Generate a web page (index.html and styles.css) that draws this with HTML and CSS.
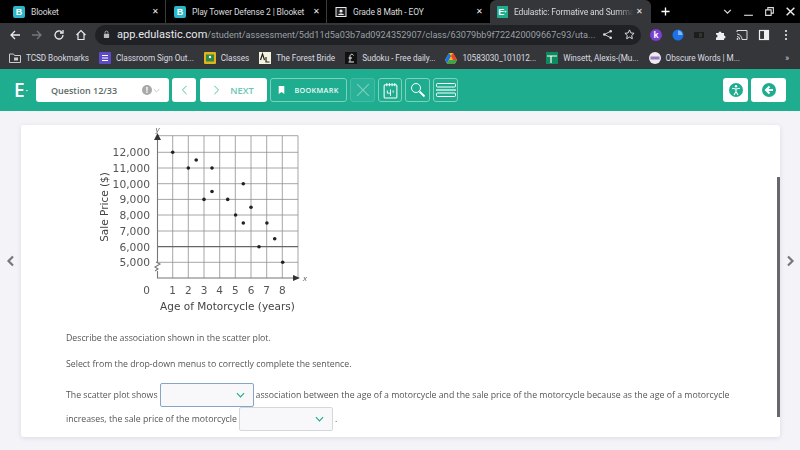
FILE: index.html
```html
<!DOCTYPE html>
<html lang="en">
<head>
<meta charset="utf-8">
<title>Edulastic</title>
<link rel="stylesheet" href="styles.css">
</head>
<body>
<div class="tabs">
  <div class="tab tab-a"><span class="fav fav-b">B</span><span class="tab-t">Blooket</span><span class="tab-x">✕</span></div>
  <div class="tab tab-b"><span class="fav fav-b">B</span><span class="tab-t">Play Tower Defense 2 | Blooket</span><span class="tab-x">✕</span></div>
  <div class="tab tab-c"><svg class="fav" viewBox="0 0 12 12"><rect x=".5" y="1" width="11" height="10" fill="#e8eaed"/><rect x="1.500" y="2" width="9" height="8" fill="#222"/><circle cx="6" cy="5" r="1.600" fill="#e8eaed"/><path d="M3 9c.5-2 5.500-2 6 0z" fill="#e8eaed"/></svg><span class="tab-t">Grade 8 Math - EOY</span><span class="tab-x">✕</span></div>
  <div class="tab tab-act"><span class="fav fav-e">E·</span><span class="tab-t tab-fade">Edulastic: Formative and Summa</span><span class="tab-x">✕</span></div>
  <svg class="plus" viewBox="0 0 10 10"><path d="M5 .5v9M.5 5h9" stroke="#fff" stroke-width="1.500"/></svg>
  <div class="win">
    <svg viewBox="0 0 10 10"><path d="M2 3.500l3 3 3-3" fill="none" stroke="#dadce0" stroke-width="1.100"/></svg>
    <svg viewBox="0 0 10 10"><path d="M1 8.500h8" stroke="#bbb" stroke-width="1.200"/></svg>
    <svg viewBox="0 0 10 10"><path d="M1.500 3.500h5v5h-5zM3.500 3.500v-2h5v5h-2" fill="none" stroke="#ddd"/></svg>
    <svg viewBox="0 0 10 10"><path d="M1.500 1.500l7 7M8.500 1.500l-7 7" stroke="#eee" stroke-width="1.300"/></svg>
  </div>
</div>
<div class="toolbar">
  <div class="nav">
    <svg viewBox="0 0 12 12"><path d="M11 6H2M6 2L2 6l4 4" fill="none" stroke="#e8eaed" stroke-width="1.300"/></svg>
    <svg viewBox="0 0 12 12"><path d="M1 6h9M6 2l4 4-4 4" fill="none" stroke="#777" stroke-width="1.300"/></svg>
    <svg viewBox="0 0 12 12"><path d="M10 6a4 4 0 1 1-1.200-2.900M10 1v3H7" fill="none" stroke="#e8eaed" stroke-width="1.300"/></svg>
    <svg viewBox="0 0 12 12"><path d="M1.500 6L6 1.500 10.500 6M3 5v5.500h6V5" fill="none" stroke="#e8eaed" stroke-width="1.200"/></svg>
  </div>
  <div class="omni">
    <svg class="lock" viewBox="0 0 8 10"><rect x="1" y="4" width="6" height="5" rx="1" fill="#b8babd"/><path d="M2.300 4V2.800a1.700 1.700 0 0 1 3.400 0V4" fill="none" stroke="#b8babd"/></svg>
    <span class="url"><b>app.edulastic.com</b>/student/assessment/5dd11d5a03b7ad0924352907/class/63079bb9f722420009667c93/uta...</span>
    <svg class="om-i" viewBox="0 0 12 12"><circle cx="9.500" cy="2.500" r="1.400" fill="#dadce0"/><circle cx="2.500" cy="6" r="1.400" fill="#dadce0"/><circle cx="9.500" cy="9.500" r="1.400" fill="#dadce0"/><path d="M9.500 2.500L2.500 6l7 3.500" fill="none" stroke="#dadce0"/></svg>
    <svg class="om-i" viewBox="0 0 12 12"><path d="M6 1l1.500 3.300 3.500.4-2.600 2.400.7 3.500L6 8.800l-3.100 1.800.7-3.500L1 4.700l3.500-.4z" fill="none" stroke="#e8eaed"/></svg>
  </div>
  <div class="exts">
    <span class="ext-k">k</span>
    <svg viewBox="0 0 12 12"><circle cx="6" cy="6" r="5.500" fill="#1a73e8"/><path d="M6 6V1.500A4.500 4.500 0 0 1 10.500 6z" fill="#8ab4f8"/></svg>
    <svg viewBox="0 0 12 12"><rect x="1" y="3" width="10" height="6" fill="#1d1d1d"/><rect x="6" y="4" width="3" height="4" fill="#333"/></svg>
    <svg viewBox="0 0 12 12"><path d="M1 4h2.500a1.500 1.500 0 0 1 3 0H9v2.500a1.500 1.500 0 0 1 0 3V11H1V8.500a1.500 1.500 0 0 0 0-3z" fill="#eceff1"/></svg>
    <svg viewBox="0 0 12 12"><path d="M1 3V1.500h10v9H6M1 5a5.500 5.500 0 0 1 5 5.500M1 7.500a3 3 0 0 1 2.800 3" fill="none" stroke="#dadce0"/><circle cx="1.500" cy="10" r=".9" fill="#dadce0"/></svg>
    <svg viewBox="0 0 12 12"><rect x="1.500" y="1.500" width="9" height="9" fill="none" stroke="#eee" stroke-width="1.200"/><rect x="6" y="2" width="4" height="8" fill="#eee"/></svg>
    <svg viewBox="0 0 12 12"><circle cx="6" cy="2" r="1.100" fill="#e8eaed"/><circle cx="6" cy="6" r="1.100" fill="#e8eaed"/><circle cx="6" cy="10" r="1.100" fill="#e8eaed"/></svg>
  </div>
</div>
<div class="bookmarks">
  <div class="bm"><svg viewBox="0 0 12 12"><path d="M.5 2h4l1 1.500h6V10.500H.5z" fill="none" stroke="#c8cacc"/><rect x="5" y="5.500" width="4" height="3" fill="#c8cacc"/></svg>TCSD Bookmarks</div>
  <div class="bm"><svg viewBox="0 0 12 12"><rect width="12" height="12" rx="1" fill="#5c4bc4"/><path d="M3 3.500h6M3 6h6M3 8.500h6" stroke="#fff"/></svg>Classroom Sign Out...</div>
  <div class="bm"><svg viewBox="0 0 12 12"><rect width="12" height="12" rx="1" fill="#e0b31c"/><rect x="2" y="2.500" width="8" height="7" fill="#2f8a48"/><circle cx="6" cy="5" r="1.200" fill="#fff"/></svg>Classes</div>
  <div class="bm"><svg viewBox="0 0 12 12"><rect width="12" height="12" fill="#f4f1de"/><path d="M1.500 8L3.500 2 5.500 8M7 5v5h3.500" fill="none" stroke="#222" stroke-width="1.200"/></svg>The Forest Bride</div>
  <div class="bm"><svg viewBox="0 0 12 12"><rect width="12" height="12" fill="#111"/><path d="M8.500 3.500C7.500 1.500 5 2 5 4.500v5M3.500 6H7M3.500 10h5.500" fill="none" stroke="#eee"/></svg>Sudoku - Free daily...</div>
  <div class="bm"><svg viewBox="0 0 12 12"><path d="M4 1h4l4 7-2 3.500H2L0 8z" fill="#fbbc04"/><path d="M0 8l2 3.500L6 4 4 1z" fill="#1a73e8"/><path d="M2 11.500h8L12 8H4z" fill="#34a853"/><path d="M8 1l4 7H8L6 4z" fill="#ea4335"/></svg>10583030_101012...</div>
  <div class="bm"><svg viewBox="0 0 12 12"><rect width="12" height="12" fill="#0f8a5f"/><path d="M1 4h10M5 4v7" stroke="#fff" stroke-width="1.200"/></svg>Winsett, Alexis-(Mu...</div>
  <div class="bm"><svg viewBox="0 0 12 12"><circle cx="6" cy="6" r="6" fill="#f1e9ee"/><rect x="1.500" y="4.500" width="9" height="3" fill="#8e7cc3"/></svg>Obscure Words | M...</div>
  <span class="bm-more">»</span>
</div>
<header class="bar">
  <div class="logo">E<i>·</i></div>
  <div class="btn q"><span>Question 12/33</span><span class="q-r"><span class="alert">!</span><svg viewBox="0 0 10 6"><path d="M1 1l4 4 4-4" fill="none" stroke="#8fb9ae"/></svg></span></div>
  <div class="btn prev"><svg viewBox="0 0 8 12"><path d="M6.500 1L1.500 6l5 5" fill="none" stroke="#54bfa8" stroke-width="1.200"/></svg></div>
  <div class="btn next"><svg viewBox="0 0 8 12"><path d="M1.500 1l5 5-5 5" fill="none" stroke="#54bfa8" stroke-width="1.200"/></svg><span>NEXT</span></div>
  <div class="out bookmark"><svg viewBox="0 0 8 10"><path d="M.5 0h7v10L4 7.500.5 10z" fill="#fff"/></svg><span>BOOKMARK</span></div>
  <div class="out sq dim"><svg viewBox="0 0 12 12"><path d="M1 1l10 10M11 1L1 11" stroke="#7fd0bd" stroke-width=".9"/></svg></div>
  <div class="out sq cal"><svg viewBox="0 0 14 16"><rect x="1" y="2.500" width="12" height="12.500" rx="1" fill="none" stroke="#fff"/><path d="M3.500 1v3M6 1v3M8.500 1v3M11 1v3M4 8v2.500h3M7 7v6M9.500 8v2" fill="none" stroke="#fff" stroke-width=".9"/></svg></div>
  <div class="out sq find"><svg viewBox="0 0 16 16"><circle cx="6" cy="6" r="4.500" fill="none" stroke="#fff"/><path d="M9.500 9.500l5 5" stroke="#fff" stroke-width="1.800"/></svg></div>
  <div class="out sq wide"><svg viewBox="0 0 20 14"><rect x=".5" y=".5" width="19" height="3.500" rx="1" fill="none" stroke="#fff"/><path d="M0 7h20" stroke="#fff" stroke-width="1.200"/><rect x=".5" y="10" width="19" height="3.500" rx="1" fill="none" stroke="#fff"/></svg></div>
  <div class="btn acc push"><svg viewBox="0 0 14 14"><circle cx="7" cy="7" r="7" fill="#1fad90"/><circle cx="7" cy="3.200" r="1.200" fill="#fff"/><path d="M3 5.200l4 .8 4-.8M7 6v2.500M7 8.500L5 12M7 8.500l2 3.500" fill="none" stroke="#fff" stroke-width="1.100"/></svg></div>
  <div class="btn exit"><svg viewBox="0 0 14 14"><circle cx="7" cy="7" r="7" fill="#1fad90"/><path d="M7.500 3.500L4 7l3.500 3.500M4.500 7H11" fill="none" stroke="#fff" stroke-width="2"/></svg></div>
</header>
<main class="stage">
  <svg class="side" viewBox="0 0 8 12"><path d="M6.500 1.500L2 6l4.500 4.500" fill="none" stroke="#77777f" stroke-width="2.200"/></svg>
  <section class="card">
    <svg class="chart" viewBox="90 125 230 195">
      <g class="grid">
        <path d="M172.700 135.700V278M188.300 135.700V278M204 135.700V278M219.700 135.700V278M235.300 135.700V278M251 135.700V278M266.700 135.700V278M282.300 135.700V278M298 135.700V278"/>
        <path d="M157.500 135.700H298M157.500 152.300H298M157.500 168H298M157.500 183.700H298M157.500 199.400H298M157.500 215H298M157.500 231H298M157.500 262.300H298"/>
      </g>
      <path class="g6" d="M157.500 246.700H298"/>
      <path class="axis" d="M157.500 140V262M156 262l4 2-5 3 3 2-3 2M157.500 271V278H294"/>
      <path class="arrow" d="M157.500 133l-3.500 7h7zM300 278l-7-3v6z"/>
      <g class="pts">
        <circle cx="172.700" cy="152.300" r="1.800"/><circle cx="188.300" cy="168" r="1.800"/><circle cx="196.200" cy="160" r="1.800"/><circle cx="212" cy="168" r="1.800"/><circle cx="204" cy="199.400" r="1.800"/><circle cx="212" cy="191.500" r="1.800"/><circle cx="227.700" cy="199.400" r="1.800"/><circle cx="243.300" cy="183.700" r="1.800"/><circle cx="235.600" cy="215" r="1.800"/><circle cx="243.300" cy="223" r="1.800"/><circle cx="251" cy="207.200" r="1.800"/><circle cx="266.900" cy="223" r="1.800"/><circle cx="259" cy="246.700" r="1.800"/><circle cx="274.700" cy="238.800" r="1.800"/><circle cx="282.700" cy="262.300" r="1.800"/>
      </g>
      <g class="ylab">
        <text x="150" y="156.200">12,000</text><text x="150" y="172">11,000</text><text x="150" y="187.700">10,000</text><text x="150" y="203.400">9,000</text><text x="150" y="219">8,000</text><text x="150" y="235">7,000</text><text x="150" y="250.700">6,000</text><text x="150" y="266.300">5,000</text>
      </g>
      <g class="xlab">
        <text x="146.500" y="294">0</text><text x="172.700" y="294">1</text><text x="188.300" y="294">2</text><text x="204" y="294">3</text><text x="219.700" y="294">4</text><text x="235.300" y="294">5</text><text x="251" y="294">6</text><text x="266.700" y="294">7</text><text x="282.300" y="294">8</text>
      </g>
      <text class="title" x="227.500" y="310">Age of Motorcycle (years)</text>
      <text class="title" transform="translate(107.500 207) rotate(-90)">Sale Price ($)</text>
      <text class="var" x="157.500" y="132">y</text>
      <text class="var" x="305" y="281">x</text>
    </svg>
    <p class="line">Describe the association shown in the scatter plot.</p>
    <p class="line sel">Select from the drop-down menus to correctly complete the sentence.</p>
    <div class="answer">
      <span>The scatter plot shows</span>
      <span class="drop focus"><svg viewBox="0 0 10 6"><path d="M1 1l4 4 4-4" fill="none" stroke="#1fad90" stroke-width="1.300"/></svg></span>
      <span>association between the age of a motorcycle and the sale price of the motorcycle because as the age of a motorcycle</span>
    </div>
    <div class="answer two">
      <span>increases, the sale price of the motorcycle</span>
      <span class="drop"><svg viewBox="0 0 10 6"><path d="M1 1l4 4 4-4" fill="none" stroke="#1fad90" stroke-width="1.300"/></svg></span>
      <span>.</span>
    </div>
    <div class="thumb"></div>
  </section>
  <svg class="side" viewBox="0 0 8 12"><path d="M1.500 1.500L6 6l-4.500 4.500" fill="none" stroke="#77777f" stroke-width="2.200"/></svg>
</main>
</body>
</html>
```
FILE: styles.css
```css
* { box-sizing: border-box; }
html, body { margin: 0; padding: 0; overflow: hidden; }
body { width: 800px; height: 450px; font-family: Roboto, "Liberation Sans", sans-serif; background: #f3f3f8; filter: blur(.3px); }

.tabs { height: 23px; background: #000; display: flex; align-items: center; color: #d8dade; font-size: 8.500px; letter-spacing: -.13px; }
.tab { height: 23px; display: flex; align-items: center; padding: 0 5px 0 13px; position: relative; }
.tab-a { width: 166px; border-right: 1px solid #3c3c3c; }
.tab-b { width: 161px; padding-left: 8px; border-right: 1px solid #3c3c3c; }
.tab-c { width: 162px; padding-left: 8px; }
.tab-act { width: 161px; background: #35363a; border-radius: 6px 6px 0 0; padding: 0 7px 0 7px; margin-left: 1px; }
.fav { width: 12px; height: 12px; flex: none; margin-right: 5px; }
.fav-b { background: #2bb7c9; border-radius: 2px; color: #fff; font: bold 9px/12px "Liberation Sans", sans-serif; text-align: center; }
.fav-e { background: #1fad90; color: #fff; font: bold 9px/12px "Liberation Sans", sans-serif; text-align: center; width: 11px; }
.tab-t { flex: 1; white-space: nowrap; overflow: hidden; min-width: 0; margin-left: 1px; }
.tab-fade { -webkit-mask-image: linear-gradient(90deg, #000 85%, transparent); mask-image: linear-gradient(90deg, #000 85%, transparent); }
.tab-x { font-size: 8px; width: 10px; text-align: center; color: #eee; flex: none; }
.plus { width: 9px; height: 9px; margin-left: 10px; }
.win { margin-left: auto; display: flex; gap: 10px; padding-right: 4px; align-items: center; }
.win svg { width: 11px; height: 11px; }

.toolbar { height: 23px; background: #35363a; display: flex; align-items: center; padding-left: 9px; }
.nav { display: flex; gap: 10px; width: 86px; }
.nav svg { width: 12px; height: 12px; }
.omni { width: 546px; height: 20px; border-radius: 10px; background: #202124; display: flex; align-items: center; padding-left: 8px; padding-right: 6px; }
.lock { width: 7px; height: 9px; flex: none; margin-right: 7px; }
.url { font-size: 9.150px; color: #9aa0a6; white-space: nowrap; width: 484px; overflow: hidden; }
.url b { font-weight: 400; color: #e8eaed; font-size: 11px; }
.om-i { width: 11px; height: 11px; margin-left: 6px; flex: none; }
.om-i + .om-i { margin-left: 11px; }
.exts { display: flex; gap: 9.600px; margin-left: 9px; align-items: center; }
.exts svg, .ext-k { width: 12px; height: 12px; }
.ext-k { border-radius: 50%; background: #7c3fd1; color: #fff; font: bold 9px/12px "Liberation Sans", sans-serif; text-align: center; }

.bookmarks { height: 23px; background: #35363a; display: flex; align-items: center; padding-left: 9px; color: #dadce0; font-size: 8.200px; letter-spacing: -.05px; gap: 10px; white-space: nowrap; }
.bm { display: flex; align-items: center; gap: 5px; }
.bm svg { width: 12px; height: 12px; flex: none; }
.bm-more { margin-left: auto; padding-right: 11px; }

.bar { height: 42px; background: #1fad90; display: flex; align-items: center; padding: 0 14px; gap: 3px; }
.logo { width: 19px; color: #fff; font: 600 19px/1 "Open Sans", sans-serif; display: flex; align-items: center; gap: 1px; }
.logo i { font-style: normal; font-size: 9px; }
.btn { height: 24px; background: #fff; border-radius: 3px; display: flex; align-items: center; justify-content: center; flex: none; }
.q { width: 133px; justify-content: space-between; padding: 0 9px 0 15px; color: #5a6b68; font: 600 9px "Open Sans", sans-serif; }
.q-r { display: flex; align-items: center; gap: 1px; }
.alert { width: 10px; height: 10px; border-radius: 50%; background: #a8a8a8; color: #fff; font: bold 8px/10px "Open Sans", sans-serif; text-align: center; }
.q-r svg { width: 7px; height: 5px; }
.prev { width: 24px; margin-right: 1px; }
.prev svg, .next svg { width: 7px; height: 10px; }
.next { width: 67px; gap: 10px; color: #6cc7b4; font: 600 9.300px "Open Sans", sans-serif; }
.out { height: 24px; border: 1px solid #7fd0bd; border-radius: 3px; display: flex; align-items: center; justify-content: center; flex: none; }
.bookmark { width: 77px; gap: 9px; color: #eafaf6; font: 600 7.300px "Open Sans", sans-serif; letter-spacing: .3px; }
.bookmark svg { width: 7px; height: 8px; }
.sq { width: 25px; }
.sq svg { width: 14px; height: 14px; }
.sq.wide svg { width: 20px; }
.sq.find svg { width: 16px; height: 16px; }
.sq.cal svg { width: 15px; height: 17px; }
.cal { width: 24px; }
.dim { border-color: #45bca3; background: #2ab298; }
.acc { width: 25px; }
.push { margin-left: auto; }
.acc svg, .exit svg { width: 14px; height: 14px; }
.exit { width: 35px; }

.stage { display: flex; align-items: flex-start; height: 339px; padding: 14px 5px 13px 6px; gap: 6px; }
.side { width: 9px; height: 12px; flex: none; margin-top: 130px; }
.card { flex: 1; height: 312px; background: #fff; border-radius: 3px; box-shadow: 0 1px 5px rgba(60, 60, 90, .12); padding-left: 45px; position: relative; font: 8.760px "Open Sans", sans-serif; color: #555; overflow: hidden; }
.chart { display: block; width: 230px; height: 195px; margin-left: 24px; }
.grid path { fill: none; stroke: #8f8f8f; stroke-width: .8; }
.g6 { stroke: #666; stroke-width: 1.200; fill: none; }
.axis { fill: none; stroke: #777; stroke-width: 1.100; }
.arrow { fill: #333; }
.pts circle { fill: #222; }
.chart text { font-family: "DejaVu Sans", Verdana, sans-serif; fill: #555; }
.ylab text { font-size: 10.700px; text-anchor: end; }
.xlab text { font-size: 10.500px; text-anchor: middle; }
.chart .title { font-size: 10.500px; text-anchor: middle; fill: #444; }
.chart .var { font-size: 8px; font-style: italic; text-anchor: middle; fill: #666; font-family: "Liberation Sans", sans-serif; }
.line { margin: 0; height: 14px; line-height: 14px; white-space: nowrap; }
.line:first-of-type { margin-top: 11px; }
.sel { margin-top: 12px; }
.answer { display: flex; align-items: center; gap: 2px; height: 24px; white-space: nowrap; margin-top: 12px; }
.answer.two { margin-top: 0; }
.drop { width: 94px; height: 24px; background: #f8f8fa; border: 1px solid #d4d8dc; border-radius: 2px; display: flex; align-items: center; justify-content: flex-end; padding-right: 8px; }
.focus { border-color: #86a5c6; }
.drop svg { width: 9px; height: 6px; }
.thumb { position: absolute; right: 0; top: 52px; width: 3px; height: 240px; background: #67676d; }
```
